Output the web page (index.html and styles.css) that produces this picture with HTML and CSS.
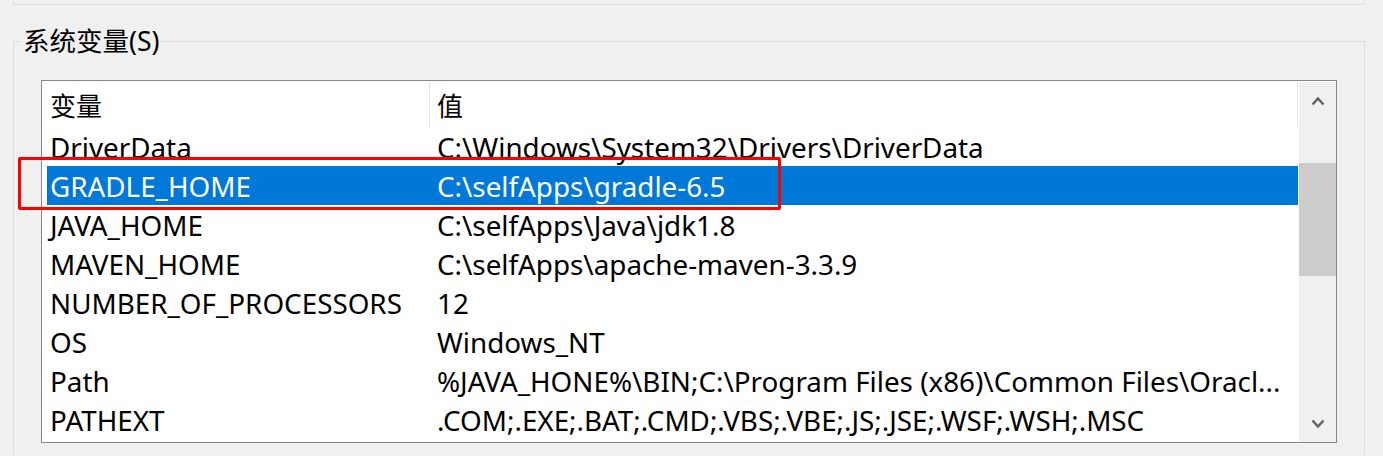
FILE: index.html
```html
<!DOCTYPE html>
<html lang="zh-CN">
<head>
<meta charset="utf-8">
<title>系统变量</title>
<link rel="stylesheet" href="styles.css">
</head>
<body>
<div class="prev-group"></div>
<fieldset class="group">
  <legend class="group-title">系统变量(S)</legend>
  <div class="list">
    <div class="table">
      <div class="head">
        <div class="hcell name">变量</div>
        <div class="hcell value">值</div>
        <div class="hcell rest"></div>
      </div>
      <div class="row"><span class="name">DriverData</span><span class="value">C:\Windows\System32\Drivers\DriverData</span></div>
      <div class="row selected"><span class="name">GRADLE_HOME</span><span class="value">C:\selfApps\gradle-6.5</span></div>
      <div class="row"><span class="name">JAVA_HOME</span><span class="value">C:\selfApps\Java\jdk1.8</span></div>
      <div class="row"><span class="name">MAVEN_HOME</span><span class="value">C:\selfApps\apache-maven-3.3.9</span></div>
      <div class="row"><span class="name">NUMBER_OF_PROCESSORS</span><span class="value">12</span></div>
      <div class="row"><span class="name">OS</span><span class="value">Windows_NT</span></div>
      <div class="row"><span class="name">Path</span><span class="value">%JAVA_HONE%\BIN;C:\Program Files (x86)\Common Files\Oracl...</span></div>
      <div class="row"><span class="name">PATHEXT</span><span class="value">.COM;.EXE;.BAT;.CMD;.VBS;.VBE;.JS;.JSE;.WSF;.WSH;.MSC</span></div>
      <div class="highlight"></div>
    </div>
    <div class="scrollbar">
      <div class="sb-btn">
        <svg width="14" height="10" viewBox="0 0 14 10"><path d="M1.5 8.5 L7 2.5 L12.5 8.5" fill="none" stroke="#606060" stroke-width="2.4"/></svg>
      </div>
      <div class="sb-track"><div class="sb-thumb"></div></div>
      <div class="sb-btn">
        <svg width="14" height="10" viewBox="0 0 14 10"><path d="M1.5 1.5 L7 7.5 L12.5 1.5" fill="none" stroke="#606060" stroke-width="2.4"/></svg>
      </div>
    </div>
  </div>
</fieldset>
</body>
</html>
```
FILE: styles.css
```css
html, body {
  margin: 0;
  padding: 0;
  background: #f0f0f0;
  overflow: hidden;
}
body {
  font-family: "Noto Sans", "Noto Sans CJK SC", sans-serif;
  font-size: 27.8px;
  color: #000;
  width: 1383px;
  height: 456px;
}
.prev-group {
  margin-left: 13px;
  width: 1350px;
  height: 4px;
  border: 1px solid #dcdcdc;
  border-top: none;
}
.group {
  margin: 24px 0 0 13px;
  width: 1350px;
  height: 425px;
  padding: 0;
  border: 1px solid #dcdcdc;
  border-bottom: none;
  box-sizing: content-box;
  min-width: 0;
}
.group-title {
  margin-left: 7px;
  padding: 0 2px;
  line-height: 24px;
  height: 24px;
  font-size: 26.5px;
}
.list {
  margin: 27px 0 0 27px;
  width: 1294px;
  height: 361px;
  border: 1px solid #828790;
  background: #fff;
  display: flex;
}
.table {
  flex: 1;
  position: relative;
  padding-left: 5px;
}
.head {
  display: flex;
  height: 46px;
  align-items: stretch;
  font-size: 26px;
}
.hcell {
  display: flex;
  align-items: center;
  box-sizing: border-box;
}
.head .name {
  width: 383px;
  padding-left: 3px;
  border-right: 1px solid #e5e5e5;
  margin-top: 1px;
}
.head .value {
  flex: 1;
  padding-left: 7px;
  border-right: 1px solid #e5e5e5;
  margin-top: 1px;
}
.head .rest {
  width: 1px;
}
.row {
  display: flex;
  height: 39px;
  align-items: center;
  margin-right: 1px;
}
.row .name {
  width: 387px;
  padding-left: 3px;
  white-space: nowrap;
}
.row .value {
  white-space: nowrap;
}
.row.selected {
  background: #0078d7;
  color: #fff;
}
.highlight {
  position: absolute;
  left: -24px;
  top: 76px;
  width: 757px;
  height: 47px;
  border: 3px solid #f00;
  border-radius: 2px;
  pointer-events: none;
}
.scrollbar {
  width: 37px;
  background: #f0f0f0;
  display: flex;
  flex-direction: column;
  margin-top: 1px;
}
.sb-btn {
  height: 37px;
  display: flex;
  align-items: center;
  justify-content: center;
}
.sb-track {
  flex: 1;
}
.sb-thumb {
  margin-top: 44px;
  height: 113px;
  background: #cdcdcd;
}
```
